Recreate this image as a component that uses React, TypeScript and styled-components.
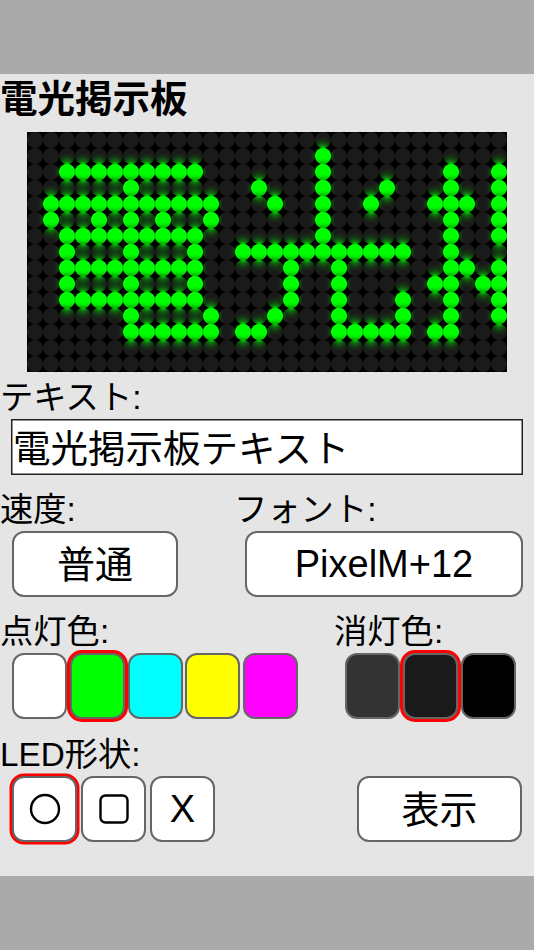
import React from "react";
import styled, { createGlobalStyle } from "styled-components";

const FONT = `"Liberation Sans", "Noto Sans CJK JP", sans-serif`;

const Global = createGlobalStyle`
  html, body { margin: 0; padding: 0; background: #aaaaaa; }
  * { box-sizing: border-box; }
`;

const Page = styled.div`
  width: 534px;
  height: 950px;
  padding: 74px 0;
  background: #aaaaaa;
  font-family: ${FONT};
  color: #000;
`;

const Panel = styled.main`
  height: 802px;
  background: #e5e5e5;
  overflow: hidden;
`;

const Title = styled.h1`
  height: 58px;
  margin: 0;
  padding-left: 0;
  font-size: 37.5px;
  line-height: 50px;
  font-weight: 700;
  white-space: nowrap;
`;

const ScreenWrap = styled.div`
  margin-left: 27px;
  width: 480px;
  height: 240px;
`;

const ScreenSvg = styled.svg`
  display: block;
`;

const Label = styled.div<{ $h: number }>`
  height: ${(p) => p.$h}px;
  display: flex;
  align-items: flex-end;
  font-size: 33.3px;
  line-height: 43px;
  white-space: nowrap;
`;

const TextField = styled.input`
  display: block;
  margin-left: 11px;
  width: 512px;
  height: 56px;
  padding: 0 2px 3px;
  border: none;
  box-shadow: inset 0 0 0 1.5px #222;
  border-radius: 0;
  background: #fff;
  font-family: ${FONT};
  font-size: 37.5px;
  color: #000;
  outline: none;
`;

const Row = styled.div<{ $cols: string }>`
  display: grid;
  grid-template-columns: ${(p) => p.$cols};
`;

const Group = styled.div``;

const Controls = styled.div<{ $gap: number; $inset?: number }>`
  display: flex;
  gap: ${(p) => p.$gap}px;
  padding-left: ${(p) => p.$inset ?? 12}px;
`;

const Button = styled.button<{ $w: number; $selected?: boolean; $cjk?: boolean }>`
  width: ${(p) => p.$w}px;
  height: 66px;
  flex: none;
  padding: 0 0 ${(p) => (p.$cjk ? 5 : 0)}px;
  display: flex;
  align-items: center;
  justify-content: center;
  border: 2px solid #666;
  border-radius: 12px;
  background: #fff;
  font-family: ${FONT};
  font-size: 38px;
  color: #000;
  box-shadow: ${(p) => (p.$selected ? "0 0 0 2.5px #ff0000" : "none")};
`;

const Swatch = styled.div<{ $color: string; $selected?: boolean }>`
  width: 55px;
  height: 66px;
  flex: none;
  border: 2px solid #666;
  border-radius: 12px;
  background: ${(p) => p.$color};
  box-shadow: ${(p) => (p.$selected ? "0 0 0 3px #ff0000" : "none")};
  position: relative;
  z-index: ${(p) => (p.$selected ? 1 : 0)};
`;

const BottomRow = styled.div`
  display: flex;
  justify-content: space-between;
  padding-right: 12px;
`;

const CircleIcon = () => (
  <svg width="32" height="32" viewBox="0 0 32 32">
    <circle cx="16" cy="16" r="14" fill="none" stroke="#000" strokeWidth="2.4" />
  </svg>
);

const SquareIcon = () => (
  <svg width="30" height="30" viewBox="0 0 30 30">
    <rect x="1.5" y="1.5" width="27" height="27" rx="5" fill="none" stroke="#000" strokeWidth="2.4" />
  </svg>
);

const LIT: Record<number, number[]> = {
  1: [18],
  2: [2, 3, 4, 5, 6, 7, 8, 9, 10, 18, 26, 29],
  3: [6, 14, 18, 22, 26, 29],
  4: [1, 2, 3, 4, 5, 6, 7, 8, 9, 10, 11, 15, 18, 21, 25, 26, 27, 29],
  5: [1, 4, 6, 8, 11, 18, 26, 29],
  6: [2, 3, 4, 5, 6, 7, 8, 9, 10, 18, 26, 29],
  7: [2, 6, 10, 13, 14, 15, 16, 17, 18, 19, 20, 21, 22, 23, 26],
  8: [2, 3, 4, 5, 6, 7, 8, 9, 10, 16, 19, 26, 27, 29],
  9: [2, 6, 10, 16, 19, 25, 26, 28, 29],
  10: [2, 3, 4, 5, 6, 7, 8, 9, 10, 16, 19, 23, 26, 29],
  11: [6, 11, 15, 19, 23, 26, 29],
  12: [6, 7, 8, 9, 10, 11, 13, 14, 19, 20, 21, 22, 23, 25, 26],
};

const COLS = 30;
const ROWS = 15;
const cx = (c: number) => 8 + c * 16;
const cy = (r: number) => 8 + r * 16;

const cells: { c: number; r: number }[] = [];
for (let r = 0; r < ROWS; r++) for (let c = 0; c < COLS; c++) cells.push({ c, r });
const lit = cells.filter(({ c, r }) => (LIT[r] || []).includes(c));

const Screen = () => (
  <ScreenSvg width="480" height="240" viewBox="0 0 480 240">
    <defs>
      <clipPath id="dots">
        {cells.map(({ c, r }) => (
          <circle key={`${c}-${r}`} cx={cx(c)} cy={cy(r)} r="8" />
        ))}
      </clipPath>
      <radialGradient id="halo">
        <stop offset="0%" stopColor="#00ff00" stopOpacity="1" />
        <stop offset="40%" stopColor="#00ff00" stopOpacity="0.95" />
        <stop offset="55%" stopColor="#00c800" stopOpacity="0.5" />
        <stop offset="78%" stopColor="#00a000" stopOpacity="0.18" />
        <stop offset="100%" stopColor="#008000" stopOpacity="0" />
      </radialGradient>
      <linearGradient id="lamp" x1="0" y1="0" x2="0" y2="1">
        <stop offset="0%" stopColor="#00ff00" />
        <stop offset="68%" stopColor="#00ff00" />
        <stop offset="100%" stopColor="#00b400" />
      </linearGradient>
    </defs>
    <rect width="480" height="240" fill="#000" />
    {cells.map(({ c, r }) => (
      <circle key={`${c}-${r}`} cx={cx(c)} cy={cy(r)} r="8" fill="#1a1a1a" />
    ))}
    <g clipPath="url(#dots)">
      {lit.map(({ c, r }) => (
        <ellipse key={`${c}-${r}`} cx={cx(c)} cy={cy(r)} rx="13" ry="20" fill="url(#halo)" />
      ))}
    </g>
    {lit.map(({ c, r }) => (
      <circle key={`${c}-${r}`} cx={cx(c)} cy={cy(r)} r="8" fill="url(#lamp)" />
    ))}
  </ScreenSvg>
);

export default function App() {
  return (
    <Page>
      <Global />
      <Panel>
        <Title>電光掲示板</Title>
        <ScreenWrap>
          <Screen />
        </ScreenWrap>
        <Label $h={47}>テキスト:</Label>
        <TextField readOnly value="電光掲示板テキスト" />
        <Row $cols="234px 300px">
          <Group>
            <Label $h={56}>速度:</Label>
            <Controls $gap={0}>
              <Button $w={166} $cjk>普通</Button>
            </Controls>
          </Group>
          <Group>
            <Label $h={56}>フォント:</Label>
            <Controls $gap={0} $inset={11}>
              <Button $w={278}>PixelM+12</Button>
            </Controls>
          </Group>
        </Row>
        <Row $cols="334px 200px">
          <Group>
            <Label $h={56}>点灯色:</Label>
            <Controls $gap={2.75}>
              <Swatch $color="#ffffff" />
              <Swatch $color="#00ff00" $selected />
              <Swatch $color="#00ffff" />
              <Swatch $color="#ffff00" />
              <Swatch $color="#ff00ff" />
            </Controls>
          </Group>
          <Group>
            <Label $h={56}>消灯色:</Label>
            <Controls $gap={3} $inset={11}>
              <Swatch $color="#333333" />
              <Swatch $color="#1a1a1a" $selected />
              <Swatch $color="#000000" />
            </Controls>
          </Group>
        </Row>
        <Label $h={57}>LED形状:</Label>
        <BottomRow>
          <Controls $gap={4}>
            <Button $w={65} $selected>
              <CircleIcon />
            </Button>
            <Button $w={65}>
              <SquareIcon />
            </Button>
            <Button $w={65}>X</Button>
          </Controls>
          <Button $w={165} $cjk>表示</Button>
        </BottomRow>
      </Panel>
    </Page>
  );
}
